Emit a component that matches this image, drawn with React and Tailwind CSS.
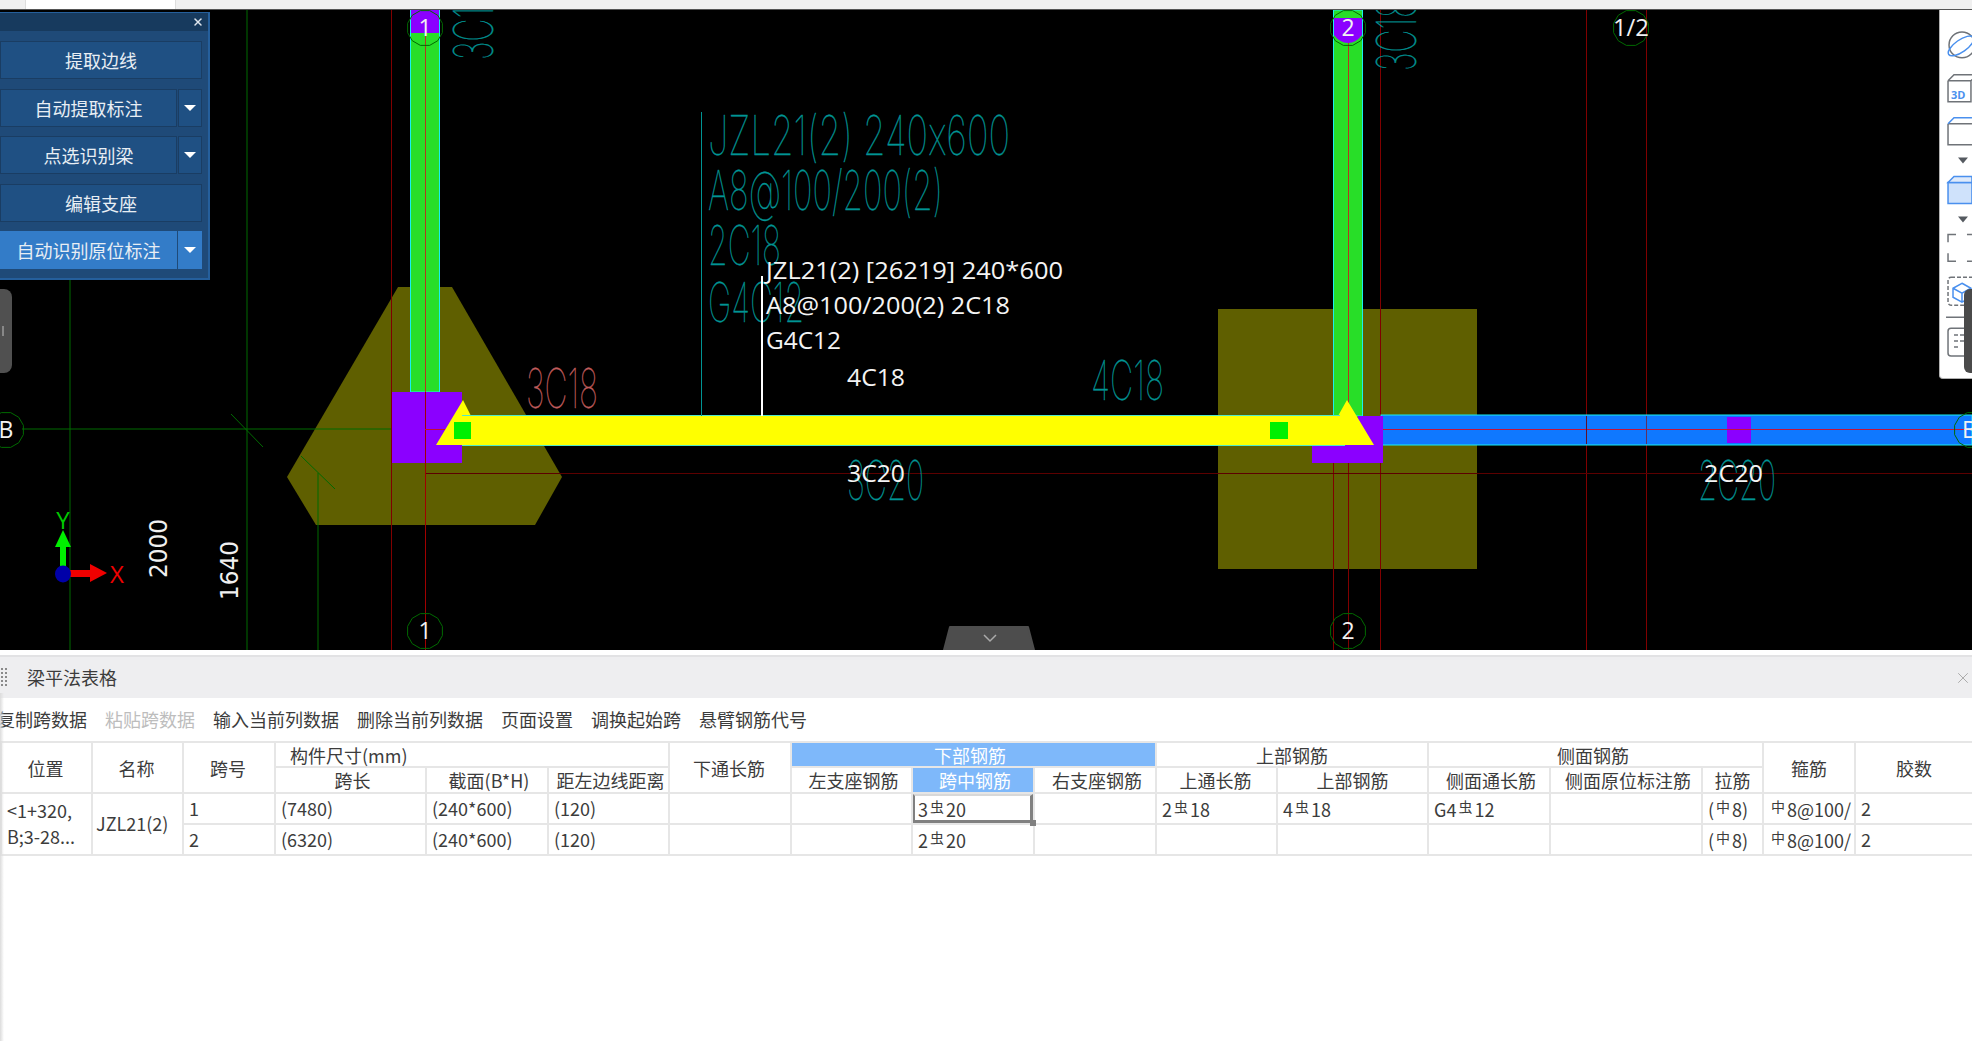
// Beam drawing canvas with the span table below it
import { X } from 'lucide-react';

const TEAL = '#009494';
const DARK_RED = '#800000';
const AXIS_GREEN = '#006a00';

function bubblePoints(cx, cy, r) {
  const pts = [];
  for (let i = 0; i < 12; i++) {
    const a = (Math.PI / 6) * i + Math.PI / 12;
    pts.push(`${cx + r * Math.cos(a)},${cy + r * Math.sin(a)}`);
  }
  return pts.join(' ');
}

function Bubble({ x, y, label, textX, len }) {
  return (
    <g>
      <polygon points={bubblePoints(x, y, 18)} fill="none" stroke={AXIS_GREEN} strokeWidth="1" />
      <text
        x={textX ?? x}
        y={y + 8}
        fill="#f2f2f2"
        fontSize="23"
        textAnchor={textX === undefined ? 'middle' : 'start'}
        textLength={len}
        lengthAdjust={len ? 'spacingAndGlyphs' : undefined}
        className="font-['Open_Sans',sans-serif]"
      >
        {label}
      </text>
    </g>
  );
}

// thin tall CAD lettering
function CadText({ x, y, w, children, color = TEAL, size = 55 }) {
  return (
    <text
      x={x}
      y={y}
      fill={color}
      stroke={color}
      strokeWidth="0.35"
      fontSize={size}
      fontWeight="100"
      textLength={w}
      lengthAdjust="spacingAndGlyphs"
      className="font-['Inter',sans-serif] [font-feature-settings:'calt'_0]"
    >
      {children}
    </text>
  );
}

function Note({ x, y, w, children }) {
  return (
    <text
      x={x}
      y={y}
      fill="#f4f4f4"
      fontSize="23"
      textLength={w}
      lengthAdjust="spacingAndGlyphs"
      className="font-['Open_Sans',sans-serif]"
    >
      {children}
    </text>
  );
}

function Drawing() {
  return (
    <svg viewBox="0 10 1972 640" className="block w-full h-full">
      <rect x="0" y="10" width="1972" height="640" fill="#000" />

      {/* footings */}
      <polygon points="398,287 452,287 562,477 535,525 316,525 287,477" fill="#5f5f00" />
      <rect x="1218" y="309" width="259" height="260" fill="#5f5f00" />

      {/* axis lines */}
      <line x1="70" y1="270" x2="70" y2="650" stroke={AXIS_GREEN} />
      <line x1="247" y1="10" x2="247" y2="650" stroke={AXIS_GREEN} />
      <line x1="318" y1="473" x2="318" y2="650" stroke={AXIS_GREEN} />
      <line x1="22" y1="429" x2="446" y2="429" stroke={AXIS_GREEN} />
      <line x1="231" y1="414" x2="263" y2="447" stroke={AXIS_GREEN} />
      <line x1="301" y1="456" x2="335" y2="489" stroke={AXIS_GREEN} />

      {/* grid lines */}
      {[391, 425, 1333, 1348, 1380, 1586, 1646].map((x) => (
        <line key={x} x1={x + 0.5} y1="10" x2={x + 0.5} y2="650" stroke={DARK_RED} />
      ))}
      <line x1="425" y1="473.5" x2="1972" y2="473.5" stroke="#5c0000" />

      {/* columns */}
      <rect x="410.5" y="10" width="29" height="382" fill="#28de28" stroke="#19f0f0" />
      <rect x="1333.5" y="10" width="29" height="406" fill="#28de28" stroke="#19f0f0" />
      <rect x="411" y="10" width="28" height="23" fill="#8b00ff" />
      <path d="M1334 18h28v17q-6 8-14 8t-14-8z" fill="#8b00ff" />
      <line x1="425.5" y1="33" x2="425.5" y2="392" stroke="#b5361e" />
      <line x1="1348.5" y1="43" x2="1348.5" y2="416" stroke="#b5361e" />

      {/* right span */}
      <rect x="1381" y="415" width="591" height="30" fill="#0f78ff" stroke="#19f0f0" />
      <rect x="1727" y="417" width="24" height="26" fill="#8b00ff" />
      <line x1="1360" y1="429.5" x2="1972" y2="429.5" stroke="#c0143c" />
      <line x1="1586.5" y1="416" x2="1586.5" y2="444" stroke="#60102a" />
      <line x1="1646.5" y1="416" x2="1646.5" y2="444" stroke="#603060" />

      {/* supports */}
      <rect x="392" y="392" width="70" height="71" fill="#8b00ff" />
      <rect x="1312" y="445" width="71" height="18" fill="#8b00ff" />
      <rect x="1358" y="416" width="25" height="30" fill="#8b00ff" />
      <line x1="425.5" y1="392" x2="425.5" y2="650" stroke="#a00000" />
      <line x1="425" y1="429.5" x2="446" y2="429.5" stroke="#c01030" />

      {/* selected beam */}
      <polygon
        points="436,445 463,400 471,416 1338,416 1347,400 1374,445"
        fill="#ffff00"
      />
      <line x1="462" y1="415.5" x2="1340" y2="415.5" stroke="#4fe8c8" />
      <line x1="462" y1="445.5" x2="1345" y2="445.5" stroke="#4fe8c8" />
      <rect x="454" y="422" width="17" height="17" fill="#00f000" />
      <rect x="1270" y="422" width="18" height="17" fill="#00f000" />

      {/* teal rebar notes */}
      <line x1="701.5" y1="112" x2="701.5" y2="416" stroke={TEAL} />
      <CadText x={708} y={155} w={302}>JZL21(2) 240x600</CadText>
      <CadText x={708} y={210} w={235}>A8@100/200(2)</CadText>
      <CadText x={708} y={265} w={73}>2C18</CadText>
      <CadText x={708} y={322} w={96}>G4C12</CadText>
      <CadText x={526} y={408} w={72} color="#c05c5c">3C18</CadText>
      <CadText x={1091} y={400} w={73}>4C18</CadText>
      <CadText x={847} y={500} w={77}>3C20</CadText>
      <CadText x={1698} y={500} w={78}>2C20</CadText>
      <g transform="translate(493 60) rotate(-90)">
        <CadText x={0} y={0} w={72}>3C18</CadText>
      </g>
      <g transform="translate(1416 71) rotate(-90)">
        <CadText x={0} y={0} w={72}>3C18</CadText>
      </g>

      {/* leader and hover notes */}
      <line x1="762" y1="276" x2="762" y2="416" stroke="#fff" strokeWidth="2" />
      <Note x={766} y={279} w={297}>JZL21(2) [26219] 240*600</Note>
      <Note x={766} y={314} w={244}>A8@100/200(2) 2C18</Note>
      <Note x={766} y={349} w={75}>G4C12</Note>
      <Note x={847} y={386} w={58}>4C18</Note>
      <Note x={847} y={482} w={58}>3C20</Note>
      <Note x={1704} y={482} w={59}>2C20</Note>

      {/* bubbles */}
      <Bubble x={425} y={28} label="1" />
      <Bubble x={1348} y={28} label="2" />
      <Bubble x={1631} y={28} label="1/2" len={36} textX={1613} />
      <Bubble x={425} y={631} label="1" />
      <Bubble x={1348} y={631} label="2" />
      <Bubble x={6} y={430} label="B" />
      <Bubble x={1972} y={430} label="B" textX={1962} />

      {/* dimensions */}
      <text
        transform="translate(167 578) rotate(-90)"
        fill="#f0f0f0"
        fontSize="24"
        textLength="59"
        lengthAdjust="spacingAndGlyphs"
        className="font-['DejaVu_Sans',sans-serif]"
      >
        2000
      </text>
      <text
        transform="translate(238 600) rotate(-90)"
        fill="#f0f0f0"
        fontSize="24"
        textLength="59"
        lengthAdjust="spacingAndGlyphs"
        className="font-['DejaVu_Sans',sans-serif]"
      >
        1640
      </text>

      {/* ucs gizmo */}
      <rect x="60" y="545" width="6" height="24" fill="#00f000" />
      <polygon points="63,530 71,547 55,547" fill="#00f000" />
      <rect x="70" y="570" width="22" height="7" fill="#f00000" />
      <polygon points="107,573 90,564 90,582" fill="#f00000" />
      <ellipse cx="63" cy="574" rx="8" ry="8.5" fill="#0000a8" />
      <text x="117" y="583" textAnchor="middle" fill="#f00000" fontSize="24" className="font-['Open_Sans',sans-serif]">X</text>
      <text x="63" y="529" textAnchor="middle" fill="#00c800" fontSize="24" className="font-['Open_Sans',sans-serif]">Y</text>

      {/* bottom collapse handle */}
      <polygon
        points="944,650 950,627 1028,627 1034,650"
        fill="#4d4d4d"
        stroke="#4d4d4d"
        strokeWidth="2"
        strokeLinejoin="round"
      />
      <path d="M984 635l6 6 6-6" fill="none" stroke="#aaa" strokeWidth="1.5" />
    </svg>
  );
}

function PanelButton({ label, active, menu }) {
  const face = active
    ? 'bg-[#337cc8] border-[#337cc8]'
    : 'bg-[#1f5083] border-[#1a3d63]';
  return (
    <div className="flex h-[38px]">
      <div className={`flex-1 flex items-center justify-center border ${face}`}>{label}</div>
      {menu && (
        <div className={`w-[24px] ml-px flex items-center justify-center border ${face}`}>
          <div className="w-0 h-0 border-l-[6px] border-r-[6px] border-t-[6px] border-l-transparent border-r-transparent border-t-white" />
        </div>
      )}
    </div>
  );
}

function FloatPanel() {
  return (
    <div className="absolute left-0 top-[2px] w-[210px] h-[268px] bg-[#1f4a78] border-r-2 border-b-2 border-t border-[#255f9c] text-[18px] text-[#e8eef4] leading-none">
      <div className="h-[18px] bg-[#173a5e] flex items-center justify-end pr-[4px]">
        <X size={12} strokeWidth={3} className="text-[#dfe6ee]" />
      </div>
      <div className="flex flex-col gap-[9.5px] pt-[10px] pr-[6px]">
        <PanelButton label="提取边线" />
        <PanelButton label="自动提取标注" menu />
        <PanelButton label="点选识别梁" menu />
        <PanelButton label="编辑支座" />
        <PanelButton label="自动识别原位标注" active menu />
      </div>
    </div>
  );
}

function ViewToolbar() {
  const gray = '#6f7378';
  const blue = '#4a90ee';
  return (
    <div className="absolute right-0 top-0 w-[33px] h-[369px] bg-white border-l border-b border-[#b0b0b0] rounded-bl-sm overflow-hidden">
      <svg viewBox="1940 10 32 369" className="block w-full h-full" fill="none" strokeWidth="1.5">
        {/* sphere */}
        <circle cx="1962" cy="45" r="13" stroke={gray} />
        <ellipse cx="1961" cy="46" rx="15" ry="6" transform="rotate(-35 1961 46)" stroke={blue} />
        {/* 3D cube */}
        <path d="M1948 81l6-6h18M1948 81v21h23v-21M1948 81h23M1971 81l3-3" stroke={gray} />
        <text x="1951" y="99" fill={blue} stroke="none" fontSize="11" fontWeight="700" className="font-['Open_Sans',sans-serif]">3D</text>
        {/* plain cube */}
        <path d="M1948 124v21h24M1948 124h24" stroke={gray} />
        <path d="M1948 124l6-6h18" stroke={blue} />
        <polygon points="1958,158 1968,158 1963,164" fill="#555a60" stroke="none" />
        {/* filled cube */}
        <path d="M1948 183v21h24v-21z" fill="#cfe2fb" stroke={blue} />
        <path d="M1948 183l6-6h18v6z" fill="#dfeafa" stroke={blue} />
        <polygon points="1958,217 1968,217 1963,223" fill="#555a60" stroke="none" />
        {/* dashed selection */}
        <path d="M1956 235h-8v8M1948 254v8h8M1967 235h5M1967 262h5" stroke={gray} />
        {/* dashed box with cube */}
        <rect x="1948" y="278" width="30" height="28" rx="3" stroke={gray} strokeDasharray="4 2" />
        <path d="M1962 284l9 5v9l-9 5-9-5v-9zM1953 289l9 5 9-5M1962 294v9" stroke={blue} />
        {/* list */}
        <line x1="1946" y1="318" x2="1966" y2="318" stroke={gray} />
        <path d="M1972 329h-21a3 3 0 0 0-3 3v22a3 3 0 0 0 3 3h21" stroke={gray} />
        <path d="M1954 336h4M1960 336h6M1954 342h4M1960 342h6M1954 348h4" stroke={gray} />
      </svg>
      <div className="absolute right-0 top-[279px] w-[8px] h-[84px] bg-[#4a4a4a] rounded-l-md" />
    </div>
  );
}

function Rebar({ children }) {
  return <span className="text-[14px] align-[5px] mx-[2px]">{children}</span>;
}

const toolbarItems = [
  { label: '复制跨数据' },
  { label: '粘贴跨数据', disabled: true },
  { label: '输入当前列数据' },
  { label: '删除当前列数据' },
  { label: '页面设置' },
  { label: '调换起始跨' },
  { label: '悬臂钢筋代号' },
];

const cellBorder = 'border-2 border-[#e6e6e6]';
const thClass = `${cellBorder} p-0 font-normal text-center`;
const subClass = `${thClass} pl-[4px]`;
const tdClass = `${cellBorder} p-0 pl-[5px] pb-[2px] text-left whitespace-nowrap overflow-hidden`;

function SpanTable() {
  return (
    <table className="table-fixed border-collapse w-[1972px] text-[18px] leading-[20px] text-[#3c3c3c]">
      <colgroup>
        <col className="w-[91px]" />
        <col className="w-[91px]" />
        <col className="w-[92px]" />
        <col className="w-[151px]" />
        <col className="w-[122px]" />
        <col className="w-[121px]" />
        <col className="w-[122px]" />
        <col className="w-[121px]" />
        <col className="w-[122px]" />
        <col className="w-[122px]" />
        <col className="w-[121px]" />
        <col className="w-[151px]" />
        <col className="w-[122px]" />
        <col className="w-[152px]" />
        <col className="w-[61px]" />
        <col className="w-[92px]" />
        <col className="w-[118px]" />
      </colgroup>
      <thead>
        <tr className="h-[25px]">
          <th rowSpan={2} className={`${thClass} pr-[2px]`}>位置</th>
          <th rowSpan={2} className={`${thClass} pr-[2px]`}>名称</th>
          <th rowSpan={2} className={`${thClass} pr-[2px]`}>跨号</th>
          <th colSpan={3} className={`${thClass} !text-left pl-[14px]`}>构件尺寸(mm)</th>
          <th rowSpan={2} className={`${thClass} pr-[2px]`}>下通长筋</th>
          <th colSpan={3} className={`${thClass} pr-[7px] bg-[#7eb8fa] !text-white border-[#6fb0f8]`}>下部钢筋</th>
          <th colSpan={2} className={thClass}>上部钢筋</th>
          <th colSpan={3} className={`${thClass} pr-[5px]`}>侧面钢筋</th>
          <th rowSpan={2} className={thClass}>箍筋</th>
          <th rowSpan={2} className={thClass}>胶数</th>
        </tr>
        <tr className="h-[26px]">
          <th className={subClass}>跨长</th>
          <th className={subClass}>截面(B*H)</th>
          <th className={subClass}>距左边线距离</th>
          <th className={subClass}>左支座钢筋</th>
          <th className={`${subClass} bg-[#7eb8fa] text-white border-[#7eb8fa]`}>跨中钢筋</th>
          <th className={subClass}>右支座钢筋</th>
          <th className={`${thClass} pr-[2px]`}>上通长筋</th>
          <th className={thClass}>上部钢筋</th>
          <th className={subClass}>侧面通长筋</th>
          <th className={subClass}>侧面原位标注筋</th>
          <th className={thClass}>拉筋</th>
        </tr>
      </thead>
      <tbody>
        <tr className="h-[31px]">
          <td rowSpan={2} className={`${tdClass} leading-[26px]`}>
            &lt;1+320,
            <br />
            B;3-28...
          </td>
          <td rowSpan={2} className={`${tdClass} !pl-[3px]`}>JZL21(2)</td>
          <td className={tdClass}>1</td>
          <td className={tdClass}>(7480)</td>
          <td className={tdClass}>(240*600)</td>
          <td className={tdClass}>(120)</td>
          <td className={tdClass}></td>
          <td className={tdClass}></td>
          <td className={`${tdClass} relative !overflow-visible`}>
            3<Rebar>虫</Rebar>20
            {/* active cell frame */}
            <div className="absolute inset-0 border-2 border-r-[3px] border-b-[3px] border-[#808080] border-t-[#d8d8d8]" />
            <div className="absolute right-[-3px] bottom-[-3px] w-[6px] h-[6px] bg-[#808080]" />
          </td>
          <td className={tdClass}></td>
          <td className={tdClass}>2<Rebar>虫</Rebar>18</td>
          <td className={tdClass}>4<Rebar>虫</Rebar>18</td>
          <td className={tdClass}>G4<Rebar>虫</Rebar>12</td>
          <td className={tdClass}></td>
          <td className={tdClass}>(<Rebar>中</Rebar>8)</td>
          <td className={tdClass}><Rebar>中</Rebar>8@100/</td>
          <td className={tdClass}>2</td>
        </tr>
        <tr className="h-[31px]">
          <td className={tdClass}>2</td>
          <td className={tdClass}>(6320)</td>
          <td className={tdClass}>(240*600)</td>
          <td className={tdClass}>(120)</td>
          <td className={tdClass}></td>
          <td className={tdClass}></td>
          <td className={tdClass}>2<Rebar>虫</Rebar>20</td>
          <td className={tdClass}></td>
          <td className={tdClass}></td>
          <td className={tdClass}></td>
          <td className={tdClass}></td>
          <td className={tdClass}></td>
          <td className={tdClass}>(<Rebar>中</Rebar>8)</td>
          <td className={tdClass}><Rebar>中</Rebar>8@100/</td>
          <td className={tdClass}>2</td>
        </tr>
      </tbody>
    </table>
  );
}

function TablePanel() {
  return (
    <div className="relative flex-1 bg-white">
      <div className="h-[5px] bg-white" />
      <div className="h-[43px] bg-[#eeeef0] border-t-[2px] border-[#e2e2e4] flex items-center justify-between pl-[27px] relative">
        <div className="absolute left-0 top-[10px] w-[8px] h-[20px] bg-[radial-gradient(#8a8a8a_1px,transparent_1.5px)] bg-[length:4px_4px]" />
        <span className="text-[18px] text-[#3c3c3c]">梁平法表格</span>
        <X size={18} strokeWidth={1.25} className="text-[#a8a8a8]" />
      </div>
      <div className="h-[43px] flex items-center gap-[18px] ml-[-3px] text-[18px] text-[#3c3c3c] whitespace-nowrap">
        {toolbarItems.map((item) => (
          <span key={item.label} className={item.disabled ? 'text-[#bdbdbd]' : ''}>
            {item.label}
          </span>
        ))}
      </div>
      <SpanTable />
      <div className="absolute left-0 top-[43px] bottom-0 w-[4px] bg-gradient-to-r from-[#dcdcdc] to-transparent" />
    </div>
  );
}

export default function App() {
  return (
    <div className="w-[1972px] h-[1041px] flex flex-col overflow-hidden bg-white font-['Noto_Sans_CJK_SC','Noto_Sans',sans-serif]">
      <div className="h-[10px] flex bg-[#f0f0f0] border-b border-[#555]">
        <div className="w-[26px] border-r border-[#ddd]" />
        <div className="w-[150px] bg-white border-r border-[#ddd]" />
      </div>
      <div className="relative h-[640px]">
        <Drawing />
        <FloatPanel />
        <div className="absolute left-0 top-[279px] w-[12px] h-[84px] bg-[#505050] rounded-r-lg flex items-center">
          <span className="w-[4px] h-[10px] border-r-2 border-[#888]" />
        </div>
        <ViewToolbar />
      </div>
      <TablePanel />
    </div>
  );
}
